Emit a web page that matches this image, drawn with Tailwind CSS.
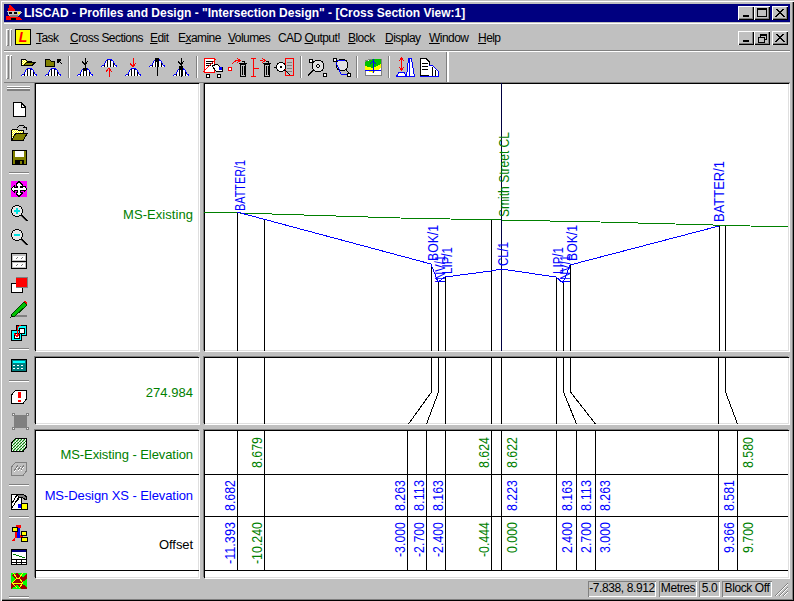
<!DOCTYPE html>
<html lang="en">
<head>
  <meta charset="UTF-8" />
  <title>LISCAD - Profiles and Design</title>
  <script src="https://cdn.jsdelivr.net/npm/@tailwindcss/browser@4"></script>
</head>
<body class="bg-[#c0c0c0]">

<!-- shared icon parts -->
<svg class="absolute w-0 h-0" aria-hidden="true">
  <defs>
    <symbol id="mound" viewBox="0 0 16 9" shape-rendering="crispEdges">
      <path d="M0 8.5L3 7L5 3L7 1.5H10L12 3L14 7L16 8.5Z" fill="#fff"/>
      <path d="M3.5 7V9M6.5 2V9M9.5 2V9M12.5 5V9" stroke="#000"/>
      <path d="M0 8.5L3 7L5 3L7 1.5H10L12 3L14 7L16 8.5" fill="none" stroke="#0000ff"/>
    </symbol>
    <pattern id="hatch" width="3" height="3" patternUnits="userSpaceOnUse">
      <rect width="3" height="3" fill="#fff"/>
      <path d="M0 3L3 0" stroke="#008000" stroke-width="1.2"/>
    </pattern>
    <pattern id="dither" width="2" height="2" patternUnits="userSpaceOnUse">
      <rect width="2" height="2" fill="#ffff00"/>
      <rect width="1" height="1" fill="#fff"/>
      <rect x="1" y="1" width="1" height="1" fill="#fff"/>
    </pattern>
  </defs>
</svg>

<div class="relative w-[794px] h-[601px] overflow-hidden flex flex-col p-[4px] bg-[#c0c0c0] text-black font-['Liberation_Sans',Arial,sans-serif] shadow-[inset_1px_1px_0_#c0c0c0,inset_2px_2px_0_#fff,inset_-1px_-1px_0_#000,inset_-2px_-2px_0_#808080]">

  <!-- Title bar -->
  <div class="h-[18px] bg-[#000080] flex items-center shrink-0">
    <svg class="w-[18px] h-[18px] ml-[1px]" viewBox="0 0 18 18" shape-rendering="crispEdges">
      <path d="M4 1H6L10 6L11 8H3Z" fill="#ff0000"/>
      <path d="M2 7H16L17 9L13 12H4Z" fill="#c0c0c0"/>
      <path d="M4 8H7V10H4ZM9 8H12V10H9Z" fill="#000"/>
      <path d="M1 12H5L3 16H1Z" fill="#ff0000"/>
      <path d="M5 11H13V13H5Z" fill="#808080"/>
      <path d="M4 13H15L17 16H3Z" fill="#ff0000"/>
      <path d="M6 14H11V16H6Z" fill="#000"/>
      <path d="M13 8H15V10H13Z" fill="#ffff00"/>
    </svg>
    <span class="ml-[1px] text-white font-bold text-[12px] whitespace-nowrap">LISCAD - Profiles and Design - "Intersection Design" - [Cross Section View:1]</span>
    <div class="ml-auto flex items-center pr-[2px]">
      <div class="w-[16px] h-[14px] bg-[#c0c0c0] shadow-[inset_1px_1px_0_#fff,inset_-1px_-1px_0_#000,inset_-2px_-2px_0_#808080] flex items-end justify-center pb-[3px]"><div class="w-[6px] h-[2px] bg-black"></div></div>
      <div class="w-[16px] h-[14px] bg-[#c0c0c0] shadow-[inset_1px_1px_0_#fff,inset_-1px_-1px_0_#000,inset_-2px_-2px_0_#808080] flex items-center justify-center"><div class="w-[10px] h-[9px] border border-black border-t-2 -mt-[1px]"></div></div>
      <div class="w-[16px] h-[14px] ml-[2px] bg-[#c0c0c0] shadow-[inset_1px_1px_0_#fff,inset_-1px_-1px_0_#000,inset_-2px_-2px_0_#808080] flex items-center justify-center">
        <svg class="w-[10px] h-[8px]" viewBox="0 0 10 8" shape-rendering="crispEdges"><path d="M1 0L9 8M2 0L10 8M9 0L1 8M8 0L0 8" stroke="#000" fill="none"/></svg>
      </div>
    </div>
  </div>

  <!-- Menu bar -->
  <div class="h-[28px] mt-[1px] shrink-0 flex items-center border-t border-t-white border-b border-b-[#808080] relative">
    <div class="ml-[2px] w-[6px] h-[17px] flex gap-[1px] shrink-0">
      <div class="w-[3px] h-full bg-[#c0c0c0] shadow-[inset_1px_1px_0_#fff,inset_-1px_-1px_0_#808080]"></div>
      <div class="w-[3px] h-full bg-[#c0c0c0] shadow-[inset_1px_1px_0_#fff,inset_-1px_-1px_0_#808080]"></div>
    </div>
    <div class="ml-[3px] w-[16px] h-[16px] bg-[#ffff00] border border-black flex items-center justify-center shrink-0">
      <span class="text-[#ff0000] font-bold italic text-[14px] leading-none">L</span>
    </div>
    <nav class="text-[12px] tracking-[-0.55px] h-full relative grow">
      <span class="absolute left-[5px] top-[5px]"><u>T</u>ask</span>
      <span class="absolute left-[39px] top-[5px]"><u>C</u>ross Sections</span>
      <span class="absolute left-[119px] top-[5px]"><u>E</u>dit</span>
      <span class="absolute left-[147px] top-[5px]">E<u>x</u>amine</span>
      <span class="absolute left-[197px] top-[5px]"><u>V</u>olumes</span>
      <span class="absolute left-[247px] top-[5px]">CAD <u>O</u>utput!</span>
      <span class="absolute left-[317px] top-[5px]"><u>B</u>lock</span>
      <span class="absolute left-[354px] top-[5px]"><u>D</u>isplay</span>
      <span class="absolute left-[398px] top-[5px]"><u>W</u>indow</span>
      <span class="absolute left-[447px] top-[5px]"><u>H</u>elp</span>
    </nav>
    <div class="flex items-center pr-[2px] mt-[2px] shrink-0">
      <div class="w-[16px] h-[14px] bg-[#c0c0c0] shadow-[inset_1px_1px_0_#fff,inset_-1px_-1px_0_#000,inset_-2px_-2px_0_#808080] flex items-end justify-center pb-[3px]"><div class="w-[6px] h-[2px] bg-black"></div></div>
      <div class="w-[16px] h-[14px] bg-[#c0c0c0] shadow-[inset_1px_1px_0_#fff,inset_-1px_-1px_0_#000,inset_-2px_-2px_0_#808080] flex items-center justify-center">
        <svg class="w-[9px] h-[9px]" viewBox="0 0 9 9" shape-rendering="crispEdges"><path d="M2.5 2.5V0.5H8.5V5.5H6.5M0.5 3.5H6.5V8.5H0.5ZM2 1H8M0 3H6" fill="none" stroke="#000"/></svg>
      </div>
      <div class="w-[16px] h-[14px] ml-[2px] bg-[#c0c0c0] shadow-[inset_1px_1px_0_#fff,inset_-1px_-1px_0_#000,inset_-2px_-2px_0_#808080] flex items-center justify-center">
        <svg class="w-[10px] h-[8px]" viewBox="0 0 10 8" shape-rendering="crispEdges"><path d="M1 0L9 8M2 0L10 8M9 0L1 8M8 0L0 8" stroke="#000" fill="none"/></svg>
      </div>
    </div>
  </div>

  <!-- Toolbar -->
  <div class="h-[31px] shrink-0 flex border-t border-t-white">
    <div class="w-[445px] flex items-center border-r-2 border-r-white shadow-[inset_-1px_0_0_#808080]">
      <div class="ml-[2px] w-[6px] h-[24px] flex gap-[1px] shrink-0">
        <div class="w-[3px] h-full bg-[#c0c0c0] shadow-[inset_1px_1px_0_#fff,inset_-1px_-1px_0_#808080]"></div>
        <div class="w-[3px] h-full bg-[#c0c0c0] shadow-[inset_1px_1px_0_#fff,inset_-1px_-1px_0_#808080]"></div>
      </div>
      <div class="ml-[5px] flex items-center">
        <svg class="w-[24px] h-[24px]" viewBox="0 0 24 24" shape-rendering="crispEdges">
          <path d="M4.5 4.5H8.5L10 6H14.5V10.5H4.5Z" fill="url(#dither)" stroke="#000"/>
          <path d="M7 10.5L10 7H19L15 10.5Z" fill="#808000" stroke="#000"/>
          <use href="#mound" x="4" y="12" width="16" height="9"/>
        </svg>
        <svg class="w-[24px] h-[24px]" viewBox="0 0 24 24" shape-rendering="crispEdges">
          <path d="M4.5 4.5H8.5L10 6H13.5V11.5H4.5Z" fill="#808000" stroke="#000"/>
          <path d="M16 4H19V5H17V7H16ZM17 5L21 9" stroke="#000" fill="none"/>
          <use href="#mound" x="4" y="12" width="16" height="9"/>
        </svg>
        <div class="w-[8px] h-[22px] flex justify-center"><div class="w-[2px] h-full bg-[#808080] border-r border-r-white"></div></div>
        <svg class="w-[24px] h-[24px]" viewBox="0 0 24 24" shape-rendering="crispEdges">
          <use href="#mound" x="4" y="12" width="16" height="9"/>
          <path d="M12 3V15M9 6L12 10L15 6" stroke="#000" fill="none"/><path d="M10 13H14V16H10Z" fill="#000"/>
        </svg>
        <svg class="w-[24px] h-[24px]" viewBox="0 0 24 24" shape-rendering="crispEdges">
          <use href="#mound" x="4" y="3" width="16" height="9"/>
          <path d="M12 14V22M9 17L12 13L15 17" stroke="#ff0000" fill="none"/>
        </svg>
        <svg class="w-[24px] h-[24px]" viewBox="0 0 24 24" shape-rendering="crispEdges">
          <use href="#mound" x="4" y="12" width="16" height="9"/>
          <path d="M12 3V12M9 8L12 12L15 8" stroke="#ff0000" fill="none"/>
        </svg>
        <svg class="w-[24px] h-[24px]" viewBox="0 0 24 24" shape-rendering="crispEdges">
          <use href="#mound" x="4" y="3" width="16" height="9"/>
          <path d="M12 3V21" stroke="#000"/><path d="M10 3H14V7H10Z" fill="#000"/>
        </svg>
        <svg class="w-[24px] h-[24px]" viewBox="0 0 24 24" shape-rendering="crispEdges">
          <use href="#mound" x="4" y="12" width="16" height="9"/>
          <path d="M12 3V22M9 6L12 10L15 6" stroke="#000" fill="none"/><path d="M10 11H14V15H10Z" fill="#000"/>
        </svg>
        <div class="w-[8px] h-[22px] flex justify-center"><div class="w-[2px] h-full bg-[#808080] border-r border-r-white"></div></div>
        <svg class="w-[24px] h-[24px]" viewBox="0 0 24 24" shape-rendering="crispEdges">
          <path d="M3.5 3.5H13.5V17.5H3.5Z" fill="#fff" stroke="#ff0000"/>
          <path d="M5 6H12M5 8H12M5 10H10" stroke="#000"/>
          <path d="M2 17L15 4" stroke="#ff0000"/>
          <path d="M11 11L16 9L19 12H21V16H15Z" fill="#fff" stroke="#000"/>
          <path d="M18 12H21V15H18Z" fill="#0000ff"/>
          <path d="M5 19H8V22H5ZM16 19H19V22H16Z" fill="#fff" stroke="#000"/>
        </svg>
        <svg class="w-[24px] h-[24px]" viewBox="0 0 24 24" shape-rendering="crispEdges">
          <path d="M3.5 12.5H6.5V15.5H3.5Z" fill="#fff" stroke="#ff0000"/>
          <path d="M7 9L11 5.5H14M12 3L15 5.5L12 8" stroke="#ff0000" fill="none"/>
          <path d="M15.5 9.5H20.5V21.5H15.5ZM14 8H22M16.5 6.5H19.5V8M17.5 11V20M19 11V20" fill="none" stroke="#000"/>
        </svg>
        <svg class="w-[24px] h-[24px]" viewBox="0 0 24 24" shape-rendering="crispEdges">
          <path d="M4.5 4V21M2 3.5H7M2 21.5H7M4.5 13H10" stroke="#ff0000" fill="none"/>
          <path d="M11 5H14M13 3L16 5.5L13 8" stroke="#ff0000" fill="none"/>
          <path d="M15.5 9.5H20.5V21.5H15.5ZM14 8H22M16.5 6.5H19.5V8M17.5 11V20M19 11V20" fill="none" stroke="#000"/>
        </svg>
        <svg class="w-[24px] h-[24px]" viewBox="0 0 24 24" shape-rendering="crispEdges">
          <path d="M12.5 3.5H20.5V20.5H12.5Z" fill="#c0c0c0" stroke="#ff0000"/>
          <path d="M14 7H19M14 10H19M14 13H19M14 16H19" stroke="#808080"/>
          <circle cx="8" cy="12" r="4.5" fill="#fff" stroke="#000"/>
          <circle cx="8" cy="12" r="1.5" fill="#000"/>
          <path d="M3 12H1M12 15L17 20" stroke="#000"/>
        </svg>
        <div class="w-[8px] h-[22px] flex justify-center"><div class="w-[2px] h-full bg-[#808080] border-r border-r-white"></div></div>
        <svg class="w-[24px] h-[24px]" viewBox="0 0 24 24" shape-rendering="crispEdges">
          <circle cx="13" cy="11" r="6" fill="#e0e0e0" stroke="#000"/>
          <path d="M13 9L15 11L13 13L11 11Z" fill="none" stroke="#000"/>
          <path d="M9 15L3 21M8 15L3 20" stroke="#000"/>
          <path d="M4 4H7V7H4ZM18 18H21V21H18Z" fill="#fff" stroke="#000"/>
        </svg>
        <svg class="w-[24px] h-[24px]" viewBox="0 0 24 24" shape-rendering="crispEdges">
          <circle cx="13" cy="10" r="6" fill="#e0e0e0" stroke="#000"/>
          <path d="M6 5L12 19M6 5H16M12 19H20" stroke="#0000ff" fill="none"/>
          <path d="M17 15L21 19" stroke="#000"/>
          <path d="M4 3H7V6H4ZM18 18H21V21H18Z" fill="#fff" stroke="#000"/>
        </svg>
        <div class="w-[8px] h-[22px] flex justify-center"><div class="w-[2px] h-full bg-[#808080] border-r border-r-white"></div></div>
        <svg class="w-[24px] h-[24px]" viewBox="0 0 24 24" shape-rendering="crispEdges">
          <path d="M4 6L10 4H20V20H4Z" fill="#fff" stroke="#808080"/>
          <path d="M4 7L12 4H20V9L12 13L4 11Z" fill="#00c000"/>
          <path d="M4 11L12 13L20 9V13L12 18L4 15Z" fill="#ffff00"/>
          <path d="M12 4V18M9 9L12 6L15 9" stroke="#0000ff" fill="none"/>
          <path d="M4 15H20" stroke="#0000ff"/>
        </svg>
        <div class="w-[8px] h-[22px] flex justify-center"><div class="w-[2px] h-full bg-[#808080] border-r border-r-white"></div></div>
        <svg class="w-[24px] h-[24px]" viewBox="0 0 24 24" shape-rendering="crispEdges">
          <path d="M8.5 3V15M6 6L8.5 3L11 6M6 12L8.5 15L11 12" stroke="#ff0000" fill="none"/>
          <path d="M3.5 21.5L6 17H11L13.5 21.5Z" fill="#fff" stroke="#0000ff"/>
          <path d="M15.5 3.5H18.5L21.5 21.5H13.5Z" fill="#fff" stroke="#0000ff"/>
          <path d="M16.5 3V21" stroke="#0000ff"/>
        </svg>
        <svg class="w-[24px] h-[24px]" viewBox="0 0 24 24" shape-rendering="crispEdges">
          <path d="M3.5 3.5H9L12.5 7V20.5H3.5Z" fill="#fff" stroke="#000"/>
          <path d="M5 8H11M5 11H11M5 14H11" stroke="#000"/>
          <path d="M12 10H15L21 16L22 21H12Z" fill="#fff"/>
          <path d="M12 10H15L21 16L22 21M3 21.5H22" fill="none" stroke="#0000ff"/>
          <path d="M15 12V21M18 15V21" stroke="#000"/>
        </svg>
      </div>
    </div>
  </div>

  <div class="flex grow min-h-0 border-t border-t-[#808080]">

    <!-- Left toolbar -->
    <div class="w-[31px] shrink-0 flex flex-col pl-[3px]">
      <div class="h-[13px] flex items-start pt-[3px] shrink-0">
        <div class="w-[23px] h-[5px] flex flex-col">
          <div class="h-[2px] bg-white border-b border-b-[#808080]"></div>
          <div class="h-[3px] bg-white border-b-2 border-b-[#808080]"></div>
        </div>
      </div>
      <svg class="w-[24px] h-[24px] shrink-0" viewBox="0 0 24 24" shape-rendering="crispEdges">
        <path d="M6.5 6.5H14L18.5 11V20.5H6.5Z" fill="#fff" stroke="#000"/><path d="M14 7V11H18" fill="none" stroke="#000"/>
      </svg>
      <svg class="w-[24px] h-[24px] shrink-0" viewBox="0 0 24 24" shape-rendering="crispEdges">
        <path d="M4.5 10.5L6 9H10L11 10H16V14H9L4.5 20Z" fill="url(#dither)" stroke="#000"/>
        <path d="M4.5 20.5L9 13H20.5L16 20.5Z" fill="#808000" stroke="#000"/>
        <path d="M10 8L13 5H16L18 7M16 7H19V10" fill="none" stroke="#000"/>
      </svg>
      <svg class="w-[24px] h-[24px] shrink-0" viewBox="0 0 24 24" shape-rendering="crispEdges">
        <path d="M5.5 6.5H19.5V20.5H5.5Z" fill="#808000" stroke="#000"/>
        <path d="M8 7H17V13H8Z" fill="#fff"/>
        <path d="M8 16H17V20H8Z" fill="#000"/><path d="M13 17H15V20H13Z" fill="#808000"/>
      </svg>
      <div class="h-[9px] shrink-0 flex items-center"><div class="w-[20px] h-[2px] ml-[2px] bg-white border-t border-t-[#808080]"></div></div>
      <svg class="w-[24px] h-[24px] shrink-0" viewBox="0 0 24 24" shape-rendering="crispEdges">
        <path d="M4 4H20V20H4Z" fill="#ff00ff"/>
        <path d="M12 4.5L15 7.5V9H13.5V10.5H15V9L17.5 9L20 12L17 15V13.5H13.5V15H15V16.5L12 19.5L9 16.5V15H10.5V13.5H7V15L4 12L7 9V10.5H10.5V9H9V7.5Z" fill="#fff" stroke="#000"/>
      </svg>
      <svg class="w-[24px] h-[24px] shrink-0" viewBox="0 0 24 24" shape-rendering="crispEdges">
        <circle cx="10" cy="10" r="5.5" fill="#e8e8e8" stroke="#000"/>
        <path d="M7 9H13V11H7ZM9 7H11V13H9Z" fill="#00e0e0"/>
        <path d="M14 14L20 20M15 14L21 20" stroke="#000"/><path d="M14.5 15.5L19.5 20.5" stroke="#808080"/>
      </svg>
      <svg class="w-[24px] h-[24px] shrink-0" viewBox="0 0 24 24" shape-rendering="crispEdges">
        <circle cx="10" cy="10" r="5.5" fill="#e8e8e8" stroke="#000"/>
        <path d="M7 9H13V11H7Z" fill="#00e0e0"/>
        <path d="M14 14L20 20M15 14L21 20" stroke="#000"/><path d="M14.5 15.5L19.5 20.5" stroke="#808080"/>
      </svg>
      <svg class="w-[24px] h-[24px] shrink-0" viewBox="0 0 24 24" shape-rendering="crispEdges">
        <path d="M4.5 4.5H19.5V19.5H4.5Z" fill="#c0c0c0" stroke="#000"/>
        <path d="M6 7H18V11H6ZM6 14H18V18H6Z" fill="#fff"/>
        <path d="M4 12.5H20" stroke="#000"/>
        <path d="M9 10L11 8M14 10L16 8M9 17L11 15M14 17L16 15" stroke="#808080"/>
      </svg>
      <svg class="w-[24px] h-[24px] shrink-0" viewBox="0 0 24 24" shape-rendering="crispEdges">
        <path d="M4.5 10.5H15.5V19.5H4.5Z" fill="#fff" stroke="#000"/>
        <path d="M9 4H20V14H9Z" fill="#ff0000"/>
        <path d="M9 4.5H20.5V14.5H9" fill="none" stroke="#808080"/>
      </svg>
      <svg class="w-[24px] h-[24px] shrink-0" viewBox="0 0 24 24" shape-rendering="crispEdges">
        <path d="M5 18H20V20H5Z" fill="#808080"/>
        <path d="M5 17L17 5L20 8L8 19L4 20Z" fill="#00c000" stroke="#004000"/>
        <path d="M16 4H18L20 6V8Z" fill="#ff0000"/>
        <path d="M4 18L5 20H7Z" fill="#000"/>
      </svg>
      <svg class="w-[24px] h-[24px] shrink-0" viewBox="0 0 24 24" shape-rendering="crispEdges">
        <path d="M9.5 4.5H19.5V14.5H9.5Z" fill="#00ffff" stroke="#000"/>
        <path d="M4.5 9.5H14.5V19.5H4.5Z" fill="#00ffff" stroke="#000"/>
        <path d="M7 12H12V17H7ZM12 7H17V12H12Z" fill="#fff" stroke="#000"/>
        <path d="M14 4L10 6V15M7 12L10 16L13 12" fill="none" stroke="#ff0000"/>
      </svg>
      <div class="h-[8px] shrink-0 flex items-center"><div class="w-[20px] h-[2px] ml-[2px] bg-white border-t border-t-[#808080]"></div></div>
      <svg class="w-[24px] h-[24px] shrink-0" viewBox="0 0 24 24" shape-rendering="crispEdges">
        <path d="M4.5 6.5H19.5V18.5H4.5Z" fill="#008080" stroke="#000"/>
        <path d="M6 8H18V10H6Z" fill="#00ffff"/>
        <path d="M6 12H8V13H6ZM10 12H12V13H10ZM14 12H16V13H14ZM6 15H8V16H6ZM10 15H12V16H10ZM14 15H16V16H14Z" fill="#fff"/>
      </svg>
      <div class="h-[8px] shrink-0 flex items-center"><div class="w-[20px] h-[2px] ml-[2px] bg-white border-t border-t-[#808080]"></div></div>
      <svg class="w-[24px] h-[24px] shrink-0" viewBox="0 0 24 24" shape-rendering="crispEdges">
        <path d="M8.5 5.5H19.5V14L16 18.5H4.5V10Z" fill="#fff" stroke="#000"/>
        <path d="M11 7H14V13H11ZM11 15H14V17H11Z" fill="#ff0000"/>
      </svg>
      <svg class="w-[24px] h-[24px] shrink-0" viewBox="0 0 24 24" shape-rendering="crispEdges">
        <path d="M6 5H20V19H6Z" fill="#808080" stroke="#c0c0c0"/>
        <path d="M5 4H7V6H5ZM19 4H21V6H19ZM5 18H7V20H5ZM19 18H21V20H19Z" fill="#fff" stroke="#808080"/>
      </svg>
      <svg class="w-[24px] h-[24px] shrink-0" viewBox="0 0 24 24" shape-rendering="crispEdges">
        <path d="M8.5 5.5H19.5V14L16 18.5H4.5V10Z" fill="url(#hatch)" stroke="#000"/>
      </svg>
      <svg class="w-[24px] h-[24px] shrink-0" viewBox="0 0 24 24" shape-rendering="crispEdges">
        <path d="M8.5 5.5H19.5V14L16 18.5H4.5V10Z" fill="#c0c0c0" stroke="#808080"/>
        <path d="M7 15L11 9M11 14L14 10M14 14L17 9" stroke="#fff"/>
        <path d="M7 14L11 8M11 13L14 9M14 13L17 8" stroke="#808080"/>
      </svg>
      <div class="h-[8px] shrink-0 flex items-center"><div class="w-[20px] h-[2px] ml-[2px] bg-white border-t border-t-[#808080]"></div></div>
      <svg class="w-[24px] h-[24px] shrink-0" viewBox="0 0 24 24" shape-rendering="crispEdges">
        <path d="M4.5 5.5H14V20H4.5Z" fill="#fff" stroke="#000"/>
        <path d="M5 19L13 6M5 14L10 6" stroke="#000"/>
        <path d="M9 5H16L20 8L19 11L15 8H12Z" fill="#808080" stroke="#000"/>
        <path d="M13 8L9 13" stroke="#000"/>
        <path d="M14 14H20V20H14Z" fill="#ffff00" stroke="#000"/>
        <path d="M11 15H14V19H11Z" fill="#0000ff"/>
      </svg>
      <div class="h-[8px] shrink-0 flex items-center"><div class="w-[20px] h-[2px] ml-[2px] bg-white border-t border-t-[#808080]"></div></div>
      <svg class="w-[24px] h-[24px] shrink-0" viewBox="0 0 24 24" shape-rendering="crispEdges">
        <path d="M9 4H14V7H11V14H16V17H8V20H4L8 16Z" fill="#ff0000"/>
        <path d="M10 7H13V17H10Z" fill="#0000ff"/>
        <path d="M5 6H10V10H5ZM14 10H19V14H14ZM14 16H20V20H14Z" fill="#ffff00" stroke="#000"/>
      </svg>
      <svg class="w-[24px] h-[24px] shrink-0" viewBox="0 0 24 24" shape-rendering="crispEdges">
        <path d="M4.5 4.5H19.5V19.5H4.5Z" fill="#fff" stroke="#000"/>
        <path d="M5 5H19V7H5Z" fill="#000080"/>
        <path d="M6 9L12 11L18 13" stroke="#008000" fill="none"/>
        <path d="M4 14.5H20M4 17H20M9.5 14V20M14.5 14V20" stroke="#000"/>
      </svg>
      <svg class="w-[24px] h-[24px] shrink-0" viewBox="0 0 24 24" shape-rendering="crispEdges">
        <path d="M4 4H20V20H4Z" fill="#00ff00"/>
        <path d="M4 6L10 4L16 8L20 4V10L14 14L20 18V20H14L10 16L4 20V14L8 10Z" fill="#a00000"/>
        <path d="M6 4L10 9L5 14L10 19M16 4L12 9H10M12 9L16 14L12 19M5 14H16" fill="none" stroke="#ffff00"/>
      </svg>
      <div class="h-[8px] shrink-0 flex items-center"><div class="w-[20px] h-[2px] ml-[2px] bg-white border-t border-t-[#808080]"></div></div>
    </div>

    <!-- Panels + status -->
    <div class="grow flex flex-col min-w-0">
      <div class="grid grid-cols-[164px_585px] grid-rows-[268px_67px_148px] gap-x-[5px] gap-y-[6px]">

        <div class="bg-white shadow-[inset_1px_1px_0_#000,inset_-1px_-1px_0_#dfdfdf,-1px_-1px_0_#808080,1px_1px_0_#fff] flex items-center justify-end pr-[6px] pb-[5px] text-[13px] tracking-[0.05px] text-[#008000]">MS-Existing</div>

        <div class="bg-white shadow-[inset_1px_1px_0_#000,inset_-1px_-1px_0_#dfdfdf,-1px_-1px_0_#808080,1px_1px_0_#fff]">
          <svg class="block" width="585" height="268" viewBox="204 83 585 268" shape-rendering="crispEdges" font-size="15" fill="#0000ff">
            <path d="M204 212L240 213L400 218L600 222L788 227" fill="none" stroke="#008000"/>
            <path d="M237.5 212V351M264.5 219V351M431.5 264V351M438.5 282V351M445.5 277V351M491.5 220V351M556.5 277V351M563.5 283V351M570.5 265V351M719.5 226V351M725.5 226V351" stroke="#000"/>
            <path d="M501.5 83V351" stroke="#000040"/>
            <path d="M237 212L431 264L438 282L445 277L491 271L501 269L556 277L563 283L570 265L719 226" fill="none" stroke="#0000ff"/>
            <g>
              <text transform="translate(245 211) rotate(-90)" textLength="51" lengthAdjust="spacingAndGlyphs">BATTER/1</text>
              <text transform="translate(438 261) rotate(-90)" textLength="36" lengthAdjust="spacingAndGlyphs">BOK/1</text>
              <text transform="translate(445 283) rotate(-90)" textLength="28" lengthAdjust="spacingAndGlyphs">INV/1</text>
              <text transform="translate(452 274) rotate(-90)" textLength="27" lengthAdjust="spacingAndGlyphs">LIP/1</text>
              <text transform="translate(508 266) rotate(-90)" textLength="24" lengthAdjust="spacingAndGlyphs">CL/1</text>
              <text transform="translate(563 274) rotate(-90)" textLength="27" lengthAdjust="spacingAndGlyphs">LIP/1</text>
              <text transform="translate(570 283) rotate(-90)" textLength="28" lengthAdjust="spacingAndGlyphs">INV/1</text>
              <text transform="translate(577 261) rotate(-90)" textLength="36" lengthAdjust="spacingAndGlyphs">BOK/1</text>
              <text transform="translate(724 222) rotate(-90)" textLength="61" lengthAdjust="spacingAndGlyphs">BATTER/1</text>
              <text transform="translate(509 217) rotate(-90)" textLength="85" lengthAdjust="spacingAndGlyphs" fill="#008000">Smith Street CL</text>
            </g>
          </svg>
        </div>

        <div class="bg-white shadow-[inset_1px_1px_0_#000,inset_-1px_-1px_0_#dfdfdf,-1px_-1px_0_#808080,1px_1px_0_#fff] flex items-center justify-end pr-[6px] pt-[5px] text-[13px] tracking-[0.05px] text-[#008000]">274.984</div>

        <div class="bg-white shadow-[inset_1px_1px_0_#000,inset_-1px_-1px_0_#dfdfdf,-1px_-1px_0_#808080,1px_1px_0_#fff]">
          <svg class="block" width="585" height="67" viewBox="204 357 585 67" shape-rendering="crispEdges">
            <path d="M237.5 357V424M264.5 357V424M445.5 357V424M491.5 357V424M501.5 357V424M556.5 357V424M718.5 357V424" stroke="#000"/>
            <path d="M431.5 357V392L408.5 424M438.5 357V392L426.5 424M563.5 357V392L576.5 424M570.5 357V392L595.5 424M725.5 357V392L737.5 424" fill="none" stroke="#000"/>
          </svg>
        </div>

        <div class="bg-white shadow-[inset_1px_1px_0_#000,inset_-1px_-1px_0_#dfdfdf,-1px_-1px_0_#808080,1px_1px_0_#fff] flex flex-col text-[13px] tracking-[-0.08px]">
          <div class="h-[45px] border-b border-b-black flex items-center justify-end pr-[6px] pt-[5px] text-[#008000]">MS-Existing - Elevation</div>
          <div class="h-[42px] border-b border-b-black flex items-center justify-end pr-[6px] text-[#0000ff]">MS-Design XS - Elevation</div>
          <div class="h-[54px] border-b border-b-black flex items-center justify-end pr-[6px] pt-[2px]">Offset</div>
        </div>

        <div class="bg-white shadow-[inset_1px_1px_0_#000,inset_-1px_-1px_0_#dfdfdf,-1px_-1px_0_#808080,1px_1px_0_#fff]">
          <svg class="block" width="585" height="148" viewBox="204 430 585 148" shape-rendering="crispEdges" font-size="15">
            <path d="M237.5 430V570M264.5 430V570M407.5 430V570M426.5 430V570M445.5 430V570M491.5 430V570M501.5 430V570M556.5 430V570M576.5 430V570M595.5 430V570M718.5 430V570M737.5 430V570" stroke="#000"/>
            <path d="M204 474.5H788M204 516.5H788M204 570.5H788" stroke="#000"/>
            <g fill="#008000">
              <text transform="translate(262 468) rotate(-90)" textLength="31" lengthAdjust="spacingAndGlyphs">8.679</text>
              <text transform="translate(489 468) rotate(-90)" textLength="31" lengthAdjust="spacingAndGlyphs">8.624</text>
              <text transform="translate(517 468) rotate(-90)" textLength="31" lengthAdjust="spacingAndGlyphs">8.622</text>
              <text transform="translate(753 468) rotate(-90)" textLength="31" lengthAdjust="spacingAndGlyphs">8.580</text>
              <text transform="translate(262 564) rotate(-90)" textLength="42" lengthAdjust="spacingAndGlyphs">-10.240</text>
              <text transform="translate(489 557) rotate(-90)" textLength="35" lengthAdjust="spacingAndGlyphs">-0.444</text>
              <text transform="translate(517 553) rotate(-90)" textLength="31" lengthAdjust="spacingAndGlyphs">0.000</text>
              <text transform="translate(753 553) rotate(-90)" textLength="31" lengthAdjust="spacingAndGlyphs">9.700</text>
            </g>
            <g fill="#0000ff">
              <text transform="translate(235 511) rotate(-90)" textLength="31" lengthAdjust="spacingAndGlyphs">8.682</text>
              <text transform="translate(405 511) rotate(-90)" textLength="31" lengthAdjust="spacingAndGlyphs">8.263</text>
              <text transform="translate(424 511) rotate(-90)" textLength="31" lengthAdjust="spacingAndGlyphs">8.113</text>
              <text transform="translate(443 511) rotate(-90)" textLength="31" lengthAdjust="spacingAndGlyphs">8.163</text>
              <text transform="translate(517 511) rotate(-90)" textLength="31" lengthAdjust="spacingAndGlyphs">8.223</text>
              <text transform="translate(572 511) rotate(-90)" textLength="31" lengthAdjust="spacingAndGlyphs">8.163</text>
              <text transform="translate(591 511) rotate(-90)" textLength="31" lengthAdjust="spacingAndGlyphs">8.113</text>
              <text transform="translate(610 511) rotate(-90)" textLength="31" lengthAdjust="spacingAndGlyphs">8.263</text>
              <text transform="translate(734 511) rotate(-90)" textLength="31" lengthAdjust="spacingAndGlyphs">8.581</text>
              <text transform="translate(235 564) rotate(-90)" textLength="42" lengthAdjust="spacingAndGlyphs">-11.393</text>
              <text transform="translate(405 557) rotate(-90)" textLength="35" lengthAdjust="spacingAndGlyphs">-3.000</text>
              <text transform="translate(424 557) rotate(-90)" textLength="35" lengthAdjust="spacingAndGlyphs">-2.700</text>
              <text transform="translate(443 557) rotate(-90)" textLength="35" lengthAdjust="spacingAndGlyphs">-2.400</text>
              <text transform="translate(572 553) rotate(-90)" textLength="31" lengthAdjust="spacingAndGlyphs">2.400</text>
              <text transform="translate(591 553) rotate(-90)" textLength="31" lengthAdjust="spacingAndGlyphs">2.700</text>
              <text transform="translate(610 553) rotate(-90)" textLength="31" lengthAdjust="spacingAndGlyphs">3.000</text>
              <text transform="translate(734 553) rotate(-90)" textLength="31" lengthAdjust="spacingAndGlyphs">9.366</text>
            </g>
          </svg>
        </div>
      </div>

      <!-- Status bar -->
      <div class="h-[19px] pt-[3px] flex justify-end text-[12px] tracking-[-0.4px] leading-[15px] text-center">
        <div class="w-[68px] shadow-[inset_1px_1px_0_#808080,inset_-1px_-1px_0_#fff]">-7.838, 8.912</div>
        <div class="w-[38px] ml-[3px] shadow-[inset_1px_1px_0_#808080,inset_-1px_-1px_0_#fff]">Metres</div>
        <div class="w-[21px] ml-[2px] shadow-[inset_1px_1px_0_#808080,inset_-1px_-1px_0_#fff]">5.0</div>
        <div class="w-[50px] ml-[2px] shadow-[inset_1px_1px_0_#808080,inset_-1px_-1px_0_#fff]">Block Off</div>
        <svg class="w-[18px] h-[16px]" viewBox="0 0 18 16" shape-rendering="crispEdges">
          <path d="M3 15L16 2M7 15L16 6M11 15L16 10" stroke="#808080" fill="none"/>
          <path d="M4 15L16 3M8 15L16 7M12 15L16 11" stroke="#fff" fill="none"/>
        </svg>
      </div>
    </div>
  </div>
</div>

</body>
</html>
